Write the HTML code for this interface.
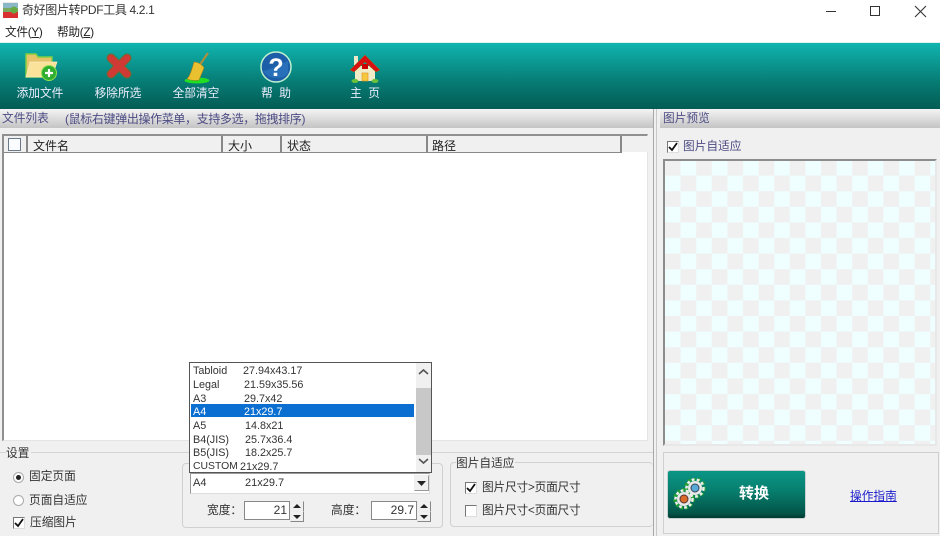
<!DOCTYPE html>
<html lang="zh"><head><meta charset="utf-8"><title>奇好图片转PDF工具</title>
<style>
html,body{margin:0;padding:0;background:#f0f0f0}
#a{position:relative;width:940px;height:536px;overflow:hidden;background:#f0f0f0;font:11.7px "Liberation Sans","Noto Sans CJK SC",sans-serif;color:#222}
#a div,#a span.t,#a svg{position:absolute}
.t{position:absolute;white-space:nowrap;line-height:14px}
.w{color:#eef;font-size:11.7px;text-align:center;width:80px}
.h{background:linear-gradient(#f4f4f4,#c4c4c4);height:19px;top:109px}
.p{color:#4c4c84}
.m{font-size:10.8px;color:#333;line-height:12px;white-space:nowrap}
.cb{width:10px;height:10px;background:#fff;border:1px solid #777;border-right-color:#ddd;border-bottom-color:#ddd}
.rb{width:9px;height:9px;border-radius:50%;background:#fff;border:1px solid #aaa}
.hc{position:absolute;top:135px;height:17px;border-right:2px solid #888;font-size:12px;line-height:20px;overflow:hidden;box-sizing:border-box}
.sb{background:#f0f0f0;border:1px solid #888;border-top-color:#eee;border-left-color:#eee;box-sizing:border-box;width:14px;height:11px}
.in{background:#fff;border:1px solid #888;box-sizing:border-box;height:19px;font-size:12px;text-align:right;line-height:17px;padding-right:2px;color:#333}
.g{border:1px solid #d0d0d0;border-radius:4px;box-sizing:border-box}
</style></head><body><div id="a">
<div style="left:0;top:0;width:940px;height:42px;background:#fff"></div>
<svg style="left:3px;top:2px" width="15" height="16" viewBox="0 0 15 16"><rect width="15" height="16" fill="#e8e8e8"/><rect y="1" width="15" height="8" fill="#8ab8c8"/><rect y="6" width="15" height="4" fill="#7aa860"/><rect y="10" width="15" height="6" fill="#d83030"/><circle cx="11" cy="8" r="3.5" fill="#6a4"/></svg>
<span class="t" style="left:22px;top:3px;font-size:12px;letter-spacing:-.35px;color:#333">奇好图片转PDF工具 4.2.1</span>
<span class="t" style="left:5px;top:26px;color:#222;letter-spacing:-.3px">文件(<u>Y</u>)</span>
<span class="t" style="left:57px;top:26px;color:#222;letter-spacing:-.3px">帮助(<u>Z</u>)</span>
<svg style="left:826px;top:3px" width="110" height="16" viewBox="0 0 110 16" fill="none" stroke="#333" stroke-width="1"><path d="M0 8.500H10"/><rect x="44.500" y="3.500" width="9" height="9"/><path d="M89 3L100 14M100 3L89 14" stroke-width="1.100"/></svg>

<div style="left:0;top:42px;width:940px;height:67px;background:linear-gradient(#dff3f3 0,#dff3f3 1px,#10b5b0 1px,#0c9a94 28%,#067a72 62%,#035c54 100%)"></div>
<svg style="left:25px;top:51px" width="33" height="31" viewBox="0 0 33 31"><path d="M1 3h10l2 3h14v20H1z" fill="#e6c268" stroke="#7ed040" stroke-width="1.400"/><path d="M1 26L5 11h27l-5 15z" fill="#fbe29a" stroke="#f8eec0" stroke-width=".7"/><circle cx="24" cy="22" r="7.500" fill="#2fae2f" stroke="#8fe04f"/><path d="M20 22h8M24 18v8" stroke="#fff" stroke-width="2.200"/></svg>
<svg style="left:106px;top:53px" width="26" height="26" viewBox="0 0 26 26" fill="none" stroke-linecap="round"><path d="M5 5L21 21M21 5L5 21" stroke="#6f6a30" stroke-width="9"/><path d="M5 5L21 21M21 5L5 21" stroke="#d03a34" stroke-width="7"/></svg>
<svg style="left:184px;top:52px" width="26" height="32" viewBox="0 0 26 32"><ellipse cx="13" cy="28.500" rx="12.500" ry="3" fill="#22dd22"/><path d="M24 1L15 14" stroke="#a89040" stroke-width="2.200"/><path d="M10 10c4 0 9 3 10 6l-5 12c-3 1-10 0-12-1 3-3 5-10 7-17z" fill="#e8c030" stroke="#a08020" stroke-width=".6"/></svg>
<svg style="left:260px;top:51px" width="32" height="32" viewBox="0 0 32 32"><circle cx="16" cy="16" r="15" fill="#1c5fa8" stroke="#bff0d0" stroke-width="1.500"/><path d="M3 20c8-1 14-6 25-10v12c-4 6-18 8-25-2z" fill="#2e78c0" opacity=".7"/><text x="16" y="25" text-anchor="middle" font-family="Liberation Sans" font-size="25" font-weight="bold" fill="#fff">?</text></svg>
<svg style="left:350px;top:53px" width="30" height="31" viewBox="0 0 30 31"><rect x="4" y="3" width="4" height="9" fill="#eee8c8"/><path d="M5 13h20v15H5z" fill="#f0ecc8"/><path d="M0 17L15 2l15 15-4 2L15 9 4 19z" fill="#d81010" stroke="#8a7a20" stroke-width=".5"/><rect x="12" y="11" width="6" height="5" fill="#c00"/><rect x="12" y="20" width="6" height="8" fill="#f5c840" stroke="#e09020" stroke-width=".6"/><ellipse cx="5" cy="28" rx="3.500" ry="2" fill="#6ac03a"/><ellipse cx="25" cy="28" rx="3.500" ry="2" fill="#6ac03a"/></svg>
<span class="t w" style="left:0;top:87px">添加文件</span>
<span class="t w" style="left:78px;top:87px">移除所选</span>
<span class="t w" style="left:156px;top:87px">全部清空</span>
<span class="t w" style="left:236px;top:87px">帮&nbsp;&nbsp;助</span>
<span class="t w" style="left:325px;top:87px">主&nbsp;&nbsp;页</span>

<div class="h" style="left:0;width:653px"></div>
<div class="h" style="left:660px;width:280px"></div>
<div style="left:653px;top:109px;width:1px;height:427px;background:#a8a8a8"></div>
<div style="left:656px;top:109px;width:1px;height:427px;background:#c8c8c8"></div>
<span class="t p" style="left:2px;top:112px">文件列表</span>
<span class="t p" style="left:65px;top:112px;font-size:12px;letter-spacing:-.36px">(鼠标右键弹出操作菜单，支持多选，拖拽排序)</span>
<span class="t p" style="left:663px;top:112px">图片预览</span>

<div style="left:2px;top:134px;width:646px;height:307px;background:#fff;border-top:2px solid #909090;border-left:2px solid #909090;border-right:1px solid #e4e4e4;border-bottom:1px solid #e4e4e4;box-sizing:border-box"></div>
<div style="left:4px;top:136px;width:644px;height:16px;background:#f0f0f0"></div>
<div style="left:4px;top:152px;width:617px;height:1px;background:#888"></div>
<div class="hc" style="left:4px;width:24px"></div>
<div class="cb" style="left:8px;top:138px;width:11px;height:11px;border-color:#6a7a8a;background:#fafcff"></div>
<div class="hc" style="left:28px;width:195px;padding-left:5px;color:#222;top:136px">文件名</div>
<div class="hc" style="left:223px;width:59px;padding-left:5px;color:#222;top:136px">大小</div>
<div class="hc" style="left:282px;width:146px;padding-left:5px;color:#222;top:136px">状态</div>
<div class="hc" style="left:428px;width:194px;padding-left:4px;color:#222;top:136px">路径</div>

<div class="cb" style="left:667px;top:141px"></div>
<svg style="left:668px;top:142px" width="10" height="10" viewBox="0 0 10 10"><path d="M1 5l3 3 5-7" fill="none" stroke="#111" stroke-width="1.800"/></svg>
<span class="t p" style="left:683px;top:140px">图片自适应</span>
<div style="left:663px;top:159px;width:274px;height:287px;box-sizing:border-box;border:2px solid #8c8c8c;border-right-color:#e8e8e8;border-bottom-color:#e8e8e8;background:#f0f0f0"></div>
<svg style="left:665px;top:161px" width="270" height="283"><defs><pattern id="c" width="31.200" height="31.200" patternUnits="userSpaceOnUse" x="0" y="-1"><rect width="31.200" height="31.200" fill="#f0f0f0"/><rect x="15.600" width="15.600" height="15.600" fill="#effefe"/><rect y="15.600" width="15.600" height="15.600" fill="#effefe"/></pattern></defs><rect width="270" height="283" fill="url(#c)"/></svg>

<div style="left:0;top:452px;width:653px;height:1px;background:#d4d4d4"></div>
<span class="t" style="left:6px;top:447px;background:#f0f0f0;padding-right:2px;color:#333">设置</span>
<div class="rb" style="left:13px;top:472px"></div><div style="left:16px;top:475px;width:5px;height:5px;border-radius:50%;background:#222"></div>
<span class="t" style="left:29px;top:470px;color:#333">固定页面</span>
<div class="rb" style="left:13px;top:495px"></div>
<span class="t" style="left:29px;top:494px;color:#333">页面自适应</span>
<div class="cb" style="left:13px;top:517px"></div>
<svg style="left:14px;top:518px" width="10" height="10" viewBox="0 0 10 10"><path d="M1 5l3 3 5-7" fill="none" stroke="#111" stroke-width="1.800"/></svg>
<span class="t" style="left:30px;top:516px;color:#333">压缩图片</span>

<div class="g" style="left:182px;top:463px;width:261px;height:65px"></div>
<div style="left:190px;top:473px;width:240px;height:21px;background:#fff;border:1px solid #999;border-right-color:#ddd;border-bottom-color:#ddd;box-sizing:border-box"></div>
<span class="m t" style="left:193px;top:477px;font-size:11px">A4</span>
<span class="m t" style="left:245px;top:477px;font-size:11px">21x29.7</span>
<div style="left:414px;top:475px;width:15px;height:16px;background:#f0f0f0;border:1px solid #999;border-top-color:#eee;border-left-color:#eee;box-sizing:border-box"></div>
<svg style="left:417px;top:481px" width="9" height="5"><path d="M0 0h9L4.500 5z" fill="#222"/></svg>
<span class="t" style="left:207px;top:504px;color:#333">宽度：</span>
<div class="in" style="left:244px;top:501px;width:46px">21</div>
<div class="sb" style="left:290px;top:501px"></div><div class="sb" style="left:290px;top:511px"></div>
<svg style="left:293px;top:504px" width="8" height="16"><path d="M0 4L4 0l4 4zM0 11h8l-4 4z" fill="#222"/></svg>
<span class="t" style="left:331px;top:504px;color:#333">高度：</span>
<div class="in" style="left:371px;top:501px;width:46px">29.7</div>
<div class="sb" style="left:417px;top:501px"></div><div class="sb" style="left:417px;top:511px"></div>
<svg style="left:420px;top:504px" width="8" height="16"><path d="M0 4L4 0l4 4zM0 11h8l-4 4z" fill="#222"/></svg>

<div style="left:189px;top:362px;width:243px;height:111px;background:#fff;border:1px solid #555;box-sizing:border-box"></div>
<div style="left:416px;top:363px;width:15px;height:109px;background:#f0f0f0"></div>
<div style="left:416px;top:388px;width:15px;height:67px;background:#c8c8c8"></div>
<svg style="left:418px;top:368px" width="11" height="100" fill="none" stroke="#555" stroke-width="1.600"><path d="M1 6l4.500-4 4.500 4M1 91l4.500 4 4.500-4"/></svg>
<div style="left:191px;top:404px;width:223px;height:13px;background:#0a6fd0"></div>
<div class="m" style="left:193px;top:365px">Tabloid</div><div class="m" style="left:243px;top:365px">27.94x43.17</div>
<div class="m" style="left:193px;top:379px">Legal</div><div class="m" style="left:244px;top:379px">21.59x35.56</div>
<div class="m" style="left:193px;top:393px">A3</div><div class="m" style="left:244px;top:393px">29.7x42</div>
<div class="m" style="left:193px;top:406px;color:#fff">A4</div><div class="m" style="left:244px;top:406px;color:#fff">21x29.7</div>
<div class="m" style="left:193px;top:420px">A5</div><div class="m" style="left:245px;top:420px">14.8x21</div>
<div class="m" style="left:193px;top:434px">B4(JIS)</div><div class="m" style="left:245px;top:434px">25.7x36.4</div>
<div class="m" style="left:193px;top:447px">B5(JIS)</div><div class="m" style="left:245px;top:447px">18.2x25.7</div>
<div class="m" style="left:193px;top:461px;font-size:10.4px">CUSTOM</div><div class="m" style="left:240px;top:461px">21x29.7</div>

<div class="g" style="left:450px;top:462px;width:203px;height:65px;border-right:0"></div>
<span class="t" style="left:456px;top:457px;background:#f0f0f0;padding-right:1px;color:#333">图片自适应</span>
<div class="cb" style="left:465px;top:482px"></div>
<svg style="left:466px;top:483px" width="10" height="10" viewBox="0 0 10 10"><path d="M1 5l3 3 5-7" fill="none" stroke="#111" stroke-width="1.800"/></svg>
<span class="t" style="left:482px;top:481px;color:#333;letter-spacing:-.2px">图片尺寸&gt;页面尺寸</span>
<div class="cb" style="left:465px;top:505px"></div>
<span class="t" style="left:482px;top:504px;color:#333;letter-spacing:-.2px">图片尺寸&lt;页面尺寸</span>

<div style="left:663px;top:452px;width:276px;height:82px;border:1px solid #cfcfcf;box-sizing:border-box"></div>
<div style="left:668px;top:471px;width:137px;height:47px;background:linear-gradient(#0b9585,#078070 40%,#035548 90%,#023a32);border-radius:2px;box-shadow:0 0 0 1px #c8d0d0"></div>
<svg style="left:673px;top:478px" width="34" height="34" viewBox="0 0 34 34" fill="none"><g stroke="#22a030"><circle cx="22" cy="10" r="9" stroke-width="3.500" stroke-dasharray="3 2"/><circle cx="11" cy="21" r="9" stroke-width="3.500" stroke-dasharray="3 2"/></g><g stroke="#eee"><circle cx="22" cy="10" r="8.500" stroke-width="2.500" stroke-dasharray="2.800 2.400"/><circle cx="11" cy="21" r="8.500" stroke-width="2.500" stroke-dasharray="2.800 2.400"/></g><circle cx="22" cy="10" r="7" fill="#e8e8e8"/><circle cx="11" cy="21" r="7" fill="#e8e8e8"/><circle cx="22" cy="10" r="4" fill="#58a8d8" stroke="#345"/><circle cx="11" cy="21" r="4" fill="#d86a2a" stroke="#533"/></svg>
<span class="t" style="left:739px;top:486px;color:#fff;font-size:15px;font-weight:bold;line-height:16px">转换</span>
<span class="t" style="left:850px;top:490px;color:#1a1acc;text-decoration:underline">操作指南</span>
</div></body></html>
